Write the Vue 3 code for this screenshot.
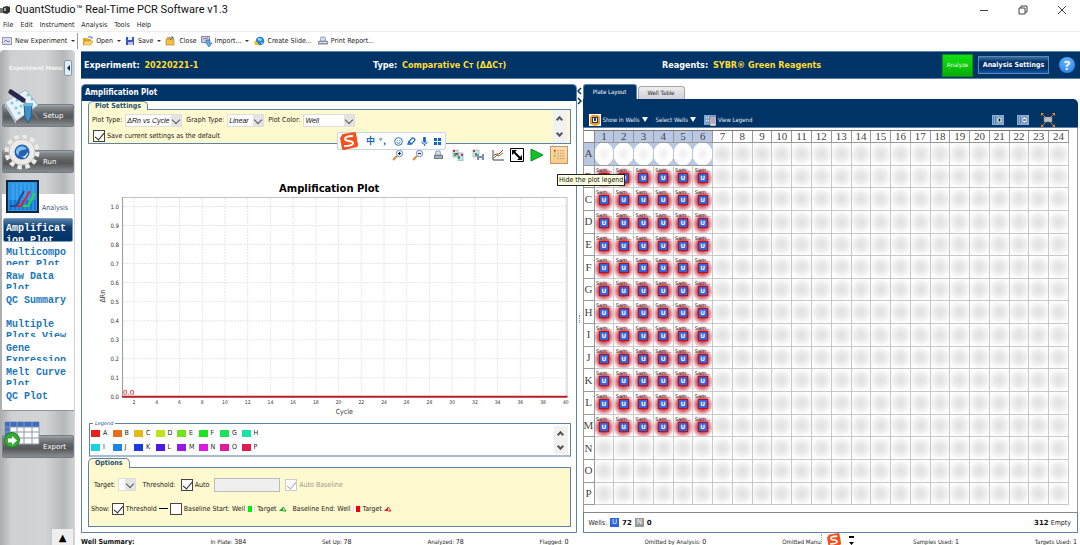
<script setup>
import { ref } from 'vue'

const menus = ['File', 'Edit', 'Instrument', 'Analysis', 'Tools', 'Help']
const tools = [
  { id: 'new', label: 'New Experiment', drop: true },
  { id: 'open', label: 'Open', drop: true },
  { id: 'save', label: 'Save', drop: true },
  { id: 'close', label: 'Close', drop: false },
  { id: 'import', label: 'Import...', drop: true },
  { id: 'slide', label: 'Create Slide...', drop: false },
  { id: 'print', label: 'Print Report...', drop: false },
]
const views = [
  'Amplification Plot', 'Multicomponent Plot', 'Raw Data Plot', 'QC Summary',
  'Multiple Plots View', 'Gene Expression', 'Melt Curve Plot', 'QC Plot',
]
const rows = 'ABCDEFGHIJKLMNOP'.split('')
const colors = [
  '#e8211c', '#e86e1c', '#e3b81a', '#bfe31a', '#74e31a', '#1ee31e', '#1ae35a', '#1ae3a8',
  '#1ad2e3', '#1a86e3', '#1a3ae3', '#4a1ae3', '#961ae3', '#dc1ae3', '#e31a9e', '#e31a50',
]
const legend = rows.map((name, i) => ({ name, color: colors[i] }))
const xTicks = Array.from({ length: 20 }, (_, i) => ({ v: 2 * (i + 1), x: 52 + i * 22.7 }))
const yTicks = Array.from({ length: 11 }, (_, i) => ({ v: (i / 10).toFixed(1), y: 232 - i * 19 }))
const status = [
  ['In Plate', 384], ['Set Up', 78], ['Analyzed', 78], ['Flagged', 0],
  ['Omitted by Analysis', 0], ['Omitted Manually', 0], ['Samples Used', 1], ['Targets Used', 1],
]
const plotType = ref('ΔRn vs Cycle')
const graphType = ref('Linear')
const plotColor = ref('Well')
const saveDefault = ref(true)
const auto = ref(true)
const autoBaseline = ref(true)
const showThreshold = ref(true)
const showBaseline = ref(false)
</script>

<template>
  <div class="app">
    <header class="titlebar">
      <svg class="logo" viewBox="0 0 11 10"><path d="M0 3h3v5H0z" fill="#777" /><path d="M3 2l4-1 3 1v5l-3 2-4-1z" fill="#333" /><path d="M4 3h2v3H4z" fill="#aaa" /></svg>
      <h1>QuantStudio™ Real-Time PCR Software v1.3</h1>
      <div class="winbtns">
        <button aria-label="Minimize"><svg viewBox="0 0 10 10"><path d="M1 5.5h8" /></svg></button>
        <button aria-label="Restore"><svg viewBox="0 0 10 10"><path d="M1 3h6v6H1zM3 3V1h6v6H7" /></svg></button>
        <button aria-label="Close window"><svg viewBox="0 0 10 10"><path d="M1 1l8 8M9 1L1 9" /></svg></button>
      </div>
    </header>
    <nav class="menubar"><button v-for="m in menus" :key="m">{{ m }}</button></nav>
    <div class="toolbar">
      <button v-for="t in tools" :key="t.id" :class="t.id">
        <svg v-if="t.id === 'new'" viewBox="0 0 10 10"><path d="M.5 1.5h9v7h-9z" fill="#d8def4" stroke="#8c97bb" /><path d="M2 6l2-2 2 2 2-1" fill="none" stroke="#c06080" /></svg>
        <svg v-else-if="t.id === 'open'" viewBox="0 0 10 10"><path d="M0 2h4l1 1h3v6H0z" fill="#e0a52a" /><path d="M2 5h8L8 9H0z" fill="#fbd768" stroke="#b8811c" stroke-width=".5" /><path d="M5 1h4v2" fill="none" stroke="#4773ad" /></svg>
        <svg v-else-if="t.id === 'save'" viewBox="0 0 10 10"><path d="M1 1h8v8H1z" fill="#3a55c8" /><path d="M3 1h4v3H3z" fill="#e8ecff" /><path d="M3 6h5v3H3z" fill="#b9c3dd" /></svg>
        <svg v-else-if="t.id === 'close'" viewBox="0 0 10 10"><path d="M1 3h8v6H1z" fill="#f2c14b" stroke="#ab7a17" stroke-width=".6" /><path d="M2 1h4v2H2z" fill="#dca030" /><path d="M5 4l3-3M8 3V1H6" stroke="#3b72c4" fill="none" /></svg>
        <svg v-else-if="t.id === 'import'" viewBox="0 0 12 12"><path d="M.5 1.5h8v6h-8z" fill="#c4cee8" stroke="#7b8bb5" /><path d="M2 4l5-1" stroke="#c56a88" /><path d="M5 5h4v3h2L8 12 5 8z" fill="#65a9df" stroke="#2b6397" stroke-width=".6" /></svg>
        <svg v-else-if="t.id === 'slide'" viewBox="0 0 12 10"><circle cx="7" cy="5" r="4.3" fill="#2f84d6" /><path d="M5 2l4 1-1 2-3-1zM8 6l2 1-2 1z" fill="#a9dcf5" /><path d="M1 5l3 1 2 3H2z" fill="#f1c800" /></svg>
        <svg v-else viewBox="0 0 10 10"><path d="M3 1h4l1 4H2z" fill="#d5deec" stroke="#69748b" stroke-width=".6" /><path d="M0 5h10v3.5H0z" fill="#8390aa" /><path d="M1 6.5h8" stroke="#dfe4f0" /></svg>
        <span>{{ t.label }}</span><i v-if="t.drop" class="caret"></i>
      </button>
    </div>

    <div class="body">
      <aside class="side">
        <div class="sidehead"><span>Experiment Menu</span><button aria-label="Collapse menu"><i></i></button></div>
        <button class="tile">
          <span class="bar">Setup</span>
          <svg viewBox="0 0 36 36"><path d="M1 14L22 2l12 15L12 33z" fill="#e8f1f7" stroke="#9fb6c6" /><path d="M1 14l11 19v3L1 18z" fill="#b5c5d0" /><g fill="#83c6e0"><circle cx="8" cy="15" r="1.5" /><circle cx="12" cy="20" r="1.5" /><circle cx="15" cy="25" r="1.5" /><circle cx="24" cy="7" r="1.5" /><circle cx="28" cy="11" r="1.5" /><circle cx="13" cy="12" r="1.5" /><circle cx="17" cy="18" r="1.5" /></g><path d="M6 2l18 15 10 14" stroke="#777" fill="none" stroke-width="1.5" /><path d="M7 4l12 8" stroke="#28264e" stroke-width="5" stroke-linecap="round" /><path d="M20 16h8l-1 13-3 6-3-6z" fill="#3f93c9" stroke="#235f8d" /><path d="M20 15h9v3h-9z" fill="#6db9e0" /></svg>
        </button>
        <button class="tile">
          <span class="bar">Run</span>
          <svg viewBox="0 0 36 36"><circle cx="18" cy="18" r="15" fill="none" stroke="#ecebe8" stroke-width="5" stroke-dasharray="4.4 3.45" /><circle cx="18" cy="18" r="13" fill="#ecebe8" stroke="#c6c5c2" /><circle cx="18" cy="18" r="7.5" fill="#2360b0" /><path d="M12 19a6 6 0 0 1 11-4l-4 1c-3 0-5 2-4 6z" fill="#7fc2ee" /><path d="M15 22c5 2 8-1 8-4l1 2-3 4z" fill="#fff" /></svg>
        </button>
        <div class="sheet">
          <button class="tile light">
            <span class="bar">Analysis</span>
            <svg viewBox="0 0 34 34"><path d="M1 1h31v31H1z" fill="#2995e8" stroke="#16243c" stroke-width="2" /><path d="M3 20h27v10H3z" fill="#1279d8" /><g stroke="#63b4f0" stroke-width=".7"><path d="M7 3v27M11 3v27M15 3v27M19 3v27M23 3v27M27 3v27" /></g><g fill="none" stroke-width="2"><path d="M4 26h6l8-15" stroke="#294a8a" /><path d="M11 26h4l9-15" stroke="#e02238" /><path d="M17 26h5l7-13" stroke="#35d83c" /></g></svg>
          </button>
          <nav class="views"><button v-for="(v, i) in views" :key="v" :class="{ on: i === 0 }"><span>{{ v }}</span></button></nav>
        </div>
        <button class="tile export">
          <span class="bar">Export</span>
          <svg viewBox="0 0 36 28"><path d="M1 1h34v22H1z" fill="#fff" stroke="#8d98a8" /><path d="M1 1h34v5H1z" fill="#3c6dc2" /><path d="M1 6h5v12H1z" fill="#4577cb" /><path d="M1 6h34M1 11h34M1 17h34M6 1v22M13 1v22M20 1v22M28 1v22" stroke="#8d98a8" /><circle cx="8" cy="19" r="7.5" fill="#39a935" stroke="#1f7e22" /><path d="M4 17.500h4V15l5 4.500-5 4.500v-2.500H4z" fill="#fff" /></svg>
        </button>
        <button class="up" aria-label="Expand">▲</button>
      </aside>

      <main>
        <section class="band">
          <div>Experiment: <b>20220221-1</b></div>
          <div>Type: <b>Comparative C<small>T</small> (ΔΔC<small>T</small>)</b></div>
          <div>Reagents: <b>SYBR® Green Reagents</b></div>
          <button class="analyze">Analyze</button>
          <button class="settings">Analysis Settings</button>
          <button class="help" aria-label="Help">?</button>
        </section>

        <div class="panes">
          <section class="plotpane">
            <h2>Amplification Plot</h2>
            <div class="inner">
              <div class="tabtitle">Plot Settings</div>
              <div class="ybox psettings">
                <div class="fields">
                  <div class="line">
                    <label for="pt">Plot Type:</label>
                    <span class="sel wide"><select id="pt" v-model="plotType"><option>ΔRn vs Cycle</option></select><i></i></span>
                    <label for="gt">Graph Type:</label>
                    <span class="sel"><select id="gt" v-model="graphType"><option>Linear</option></select><i></i></span>
                    <label for="pc">Plot Color:</label>
                    <span class="sel mid"><select id="pc" v-model="plotColor"><option>Well</option></select><i></i></span>
                  </div>
                  <label class="chk"><input v-model="saveDefault" type="checkbox" />Save current settings as the default</label>
                </div>
                <div class="scroller"><button aria-label="Scroll up"><i class="u"></i></button><button aria-label="Scroll down"><i class="d"></i></button></div>
              </div>

              <div class="plottools">
                <button aria-label="Zoom in"><svg viewBox="0 0 12 12"><path d="M1 11l4-4" stroke="#d98a3d" stroke-width="2" /><circle cx="7.500" cy="4.500" r="3.200" fill="#e5eefc" stroke="#7693c2" /><path d="M6 4.500h3M7.500 3v3" stroke="#223" /></svg></button>
                <button aria-label="Zoom out"><svg viewBox="0 0 12 12"><path d="M1 11l4-4" stroke="#d98a3d" stroke-width="2" /><circle cx="7.500" cy="4.500" r="3.200" fill="#e5eefc" stroke="#7693c2" /><path d="M6 4.500h3" stroke="#223" /></svg></button>
                <button aria-label="Print plot"><svg viewBox="0 0 12 12"><path d="M4 2h4l1 4H3z" fill="#d5deec" stroke="#69748b" stroke-width=".6" /><path d="M2 6h9v4H2z" fill="#6f7f86" /><path d="M3 8h7" stroke="#dfe4f0" /></svg></button>
                <button aria-label="Copy plot"><svg viewBox="0 0 12 12"><path d="M1 1h5v7H1zM6 4h5v8H6z" fill="#c9e0ee" stroke="#6aa0bd" stroke-width=".6" /><path d="M1 1h2v2H1zM4 4h2v2H4zM9 5h2v2H9z" fill="#d83030" /><path d="M2 4h2v3H2zM6 7h2v3H6z" fill="#37a653" /></svg></button>
                <button aria-label="Save plot"><svg viewBox="0 0 12 12"><path d="M1 1h6v7H1z" fill="#cfe3ee" stroke="#83a8bb" stroke-width=".6" /><path d="M1 1h2v2H1z" fill="#d83030" /><path d="M3 4h2v3H3z" fill="#37a653" /><path d="M5 5h7v6H5z" fill="#8291a5" /><path d="M7 5h3v2H7zM7 9h3v2H7z" fill="#edf1f6" /></svg></button>
                <button aria-label="Plot properties"><svg viewBox="0 0 12 12"><path d="M1 1v10h11" fill="none" stroke="#444" /><path d="M2 9l3-3 2 1 4-3" fill="none" stroke="#3c9a48" /><path d="M2 6l3-1 2 0 4-4" fill="none" stroke="#d22" /></svg></button>
                <button aria-label="Fit"><svg viewBox="0 0 14 14"><path d="M.5.5h13v13H.5z" fill="#fff" stroke="#000" /><path d="M4 4l6 6" stroke="#000" stroke-width="2" /><path d="M2 2h5L2 7zM12 12H7l5-5z" /></svg></button>
                <button aria-label="Play"><svg viewBox="0 0 14 14"><path d="M1 1l12 6-12 6z" fill="#12c22b" stroke="#0c8a1d" /></svg></button>
                <button class="active" aria-label="Hide legend" aria-describedby="tip"><svg viewBox="0 0 14 14"><g><path d="M1 1h2v2H1z" fill="#d22" /><path d="M1 4h2v2H1z" fill="#e8b320" /><path d="M1 7h2v2H1z" fill="#57c8a0" /><path d="M1 10h2v2H1z" fill="#d9e34a" /></g><path d="M5 2h8M5 5h8M5 8h8M5 11h8" stroke="#b89062" stroke-dasharray="2 1" /></svg></button>
                <span id="tip" role="tooltip">Hide the plot legend</span>
              </div>

              <svg class="chart" viewBox="0 0 493 256">
                <text class="ct" x="247" y="28">Amplification Plot</text>
                <path d="M40.500 33.500h444v199" fill="none" stroke="#c4c4c4" />
                <g class="grid"><path v-for="t in xTicks" :key="t.v" :d="`M${t.x} 34V232`" /><path v-for="t in yTicks" :key="t.v" :d="`M41 ${t.y + .5}H484`" /></g>
                <path d="M40.500 33V232" stroke="#999" />
                <g class="yt"><text v-for="t in yTicks" :key="t.v" x="37" :y="t.y + 3">{{ t.v }}</text></g>
                <g class="xt"><text v-for="t in xTicks" :key="t.v" :x="t.x" y="240">{{ t.v }}</text></g>
                <path d="M40 232.500h445" stroke="#b81d25" stroke-width="2" />
                <text class="zero" x="41" y="231">0.0</text>
                <text class="ax" x="262" y="250">Cycle</text>
                <text class="ax" transform="translate(23 132) rotate(-90)">ΔRn</text>
              </svg>

              <fieldset class="legend">
                <legend>Legend</legend>
                <ul><li v-for="l in legend" :key="l.name"><i :style="{ background: l.color }"></i>{{ l.name }}</li></ul>
                <div class="scroller"><button aria-label="Scroll legend up"><i class="u"></i></button><button aria-label="Scroll legend down"><i class="d"></i></button></div>
              </fieldset>

              <div class="tabtitle opt">Options</div>
              <div class="ybox options">
                <div class="line first">
                  <label for="tg">Target:</label>
                  <span class="sel tiny"><select id="tg"><option></option></select><i></i></span>
                  <label class="th" for="thr">Threshold:</label>
                  <label class="chk"><input v-model="auto" type="checkbox" />Auto</label>
                  <input id="thr" class="field" type="text" disabled />
                  <label class="chk off"><input v-model="autoBaseline" type="checkbox" disabled />Auto Baseline</label>
                </div>
                <div class="line show">
                  <span>Show:</span>
                  <label class="chk"><input v-model="showThreshold" type="checkbox" />Threshold</label>
                  <i class="dash"></i>
                  <label class="chk"><input v-model="showBaseline" type="checkbox" />Baseline Start: Well</label>
                  <i class="sw green"></i><span>Target</span>
                  <svg class="tri" viewBox="0 0 8 6"><path d="M0 5l4-4v4z" fill="#18a82c" /><path d="M4 1l3 4H4" fill="none" stroke="#18a82c" /></svg>
                  <span class="end">Baseline End: Well</span><i class="sw red"></i><span>Target</span>
                  <svg class="tri" viewBox="0 0 8 6"><path d="M0 5l4-4v4z" fill="#d81e28" /><path d="M4 1l3 4H4" fill="none" stroke="#d81e28" /></svg>
                </div>
              </div>
            </div>
          </section>

          <div class="splitter"><svg viewBox="0 0 5 18"><path d="M4 1L1 4l3 3M1 11l3 3-3 3" fill="none" stroke="#036" stroke-width="1.500" /></svg><i></i></div>

          <section class="platepane">
            <div class="tabs"><button class="on">Plate Layout</button><button>Well Table</button></div>
            <div class="pbar">
              <button><svg viewBox="0 0 12 12"><path d="M0 0h12v12H0z" fill="#fff" /><path d="M1 3l2-2h6l2 2v7l-5 2-5-2z" fill="#f19a16" /><path d="M3 3h6v6H3z" fill="#253a70" /><path d="M4.500 4v3.500h3V4" fill="none" stroke="#fff" /></svg>Show in Wells<i class="wd"></i></button>
              <button>Select Wells<i class="wd"></i></button>
              <button class="vl"><svg viewBox="0 0 12 12"><path d="M0 1h12v10H0z" fill="#7fa8d0" /><path d="M2 3h1v1H2zM4 3h1v1H4zM2 6h1v1H2zM4 6h1v1H4z" fill="#fff" /><path d="M6 3h6v9H6z" fill="#dbe3ed" stroke="#7c4b4b" stroke-width=".6" /><path d="M7 5h4M7 7h4M7 9h4" stroke="#879" /></svg>View Legend</button>
              <button class="z1" aria-label="Zoom in wells"><svg viewBox="0 0 12 10"><path d="M0 0h12v10H0z" fill="#86add5" /><path d="M1 2h4M1 4h3M1 6h3M1 8h4" stroke="#2c6197" stroke-dasharray="1 1" /><circle cx="7.500" cy="5" r="3" fill="#eef4fb" stroke="#6c86a8" /><path d="M6 5h3M7.500 3.500v3" stroke="#113" /></svg></button>
              <button class="z2" aria-label="Zoom out wells"><svg viewBox="0 0 12 10"><path d="M0 0h12v10H0z" fill="#86add5" /><path d="M1 2h4M1 4h3M1 6h3M1 8h4" stroke="#2c6197" stroke-dasharray="1 1" /><circle cx="7.500" cy="5" r="3" fill="#eef4fb" stroke="#6c86a8" /><path d="M6 5h3" stroke="#113" /></svg></button>
              <button class="z3" aria-label="Fit wells"><svg viewBox="0 0 14 14"><path d="M1 1l12 12M13 1L1 13" stroke="#d87c16" /><path d="M0 0h3L0 3zM14 0v3l-3-3zM0 14v-3l3 3zM14 14h-3l3-3z" fill="#e58619" /><path d="M3 4h8v5H3z" fill="#b9bcc0" stroke="#777" stroke-width=".5" /></svg></button>
            </div>
            <div class="platewrap">
              <table class="plate">
                <thead><tr><td></td><th v-for="c in 24" :key="c" scope="col" :class="{ hl: c < 7 }">{{ c }}</th></tr></thead>
                <tbody>
                  <tr v-for="(r, ri) in rows" :key="r">
                    <th scope="row" :class="{ hl: ri === 0 }">{{ r }}</th>
                    <td v-for="c in 24" :key="c" :class="{ picked: ri === 0 && c < 7, full: ri > 0 && ri < 13 && c < 7 }">
                      <template v-if="ri > 0 && ri < 13 && c < 7"><span>Sam...</span><b>U</b></template>
                    </td>
                  </tr>
                </tbody>
              </table>
            </div>
            <footer class="wells"><span>Wells:</span><i class="bu">U</i><b>72</b><i class="bn">N</i><b>0</b><span class="empty"><b>312</b> Empty</span></footer>
          </section>
        </div>

        <footer class="status"><strong>Well Summary:</strong><span v-for="s in status" :key="s[0]">{{ s[0] }}: <em>{{ s[1] }}</em></span></footer>
      </main>
    </div>

    <div class="ime">
      <svg class="s" viewBox="0 0 18 18"><path d="M2 3q0-1 1-1l12-2q1 0 1 1l2 12q0 2-1 2L4 18q-2 0-2-1L0 6z" fill="#f4511e" /><path d="M13 4Q5 4 5 7c0 3 8 1 8 4s-5 3-9 3" fill="none" stroke="#fff" stroke-width="2" /></svg>
      <span lang="zh">中</span>
      <span class="punct" lang="zh">°，</span>
      <svg viewBox="0 0 10 10"><circle cx="5" cy="5" r="4.300" /><path d="M3 6q2 2 4 0M3.500 3.500v1M6.500 3.500v1" /></svg>
      <svg viewBox="0 0 10 10"><path d="M1 8L2 5l4-4q2 0 3 2L5 8zM2 5l3 3" stroke-width="1.300" /></svg>
      <svg viewBox="0 0 10 10"><path d="M5 1v4" stroke-width="3" stroke-linecap="round" /><path d="M2 5q0 3 3 3t3-3M5 8v2" /></svg>
      <svg viewBox="0 0 10 10"><path d="M1 1h3.500v3.500H1zM5.500 1H9v3.500H5.500zM1 5.500h3.500V9H1zM5.500 5.500H9V9H5.500z" fill="#1464b8" stroke="none" /></svg>
    </div>
    <div class="imemini">
      <i></i>
      <svg viewBox="0 0 18 18"><path d="M2 3q0-1 1-1l12-2q1 0 1 1l2 12q0 2-1 2L4 18q-2 0-2-1L0 6z" fill="#f4511e" /><path d="M13 4Q5 4 5 7c0 3 8 1 8 4s-5 3-9 3" fill="none" stroke="#fff" stroke-width="2" /></svg>
      <svg class="m" viewBox="0 0 6 10"><path d="M0 1h5v2H0zM0 7h5L2.500 10z" /></svg>
    </div>
  </div>
</template>

<style>
html, body { margin: 0; background: #fff; }
</style>

<style scoped>
* { box-sizing: border-box; }
.app { position: relative; display: flex; flex-direction: column; min-height: 100vh; overflow: hidden; background: #fff; color: #222; font: 7px/10px "DejaVu Sans Condensed", "DejaVu Sans", sans-serif; white-space: nowrap; }
button { margin: 0; padding: 0; border: 0; background: none; color: inherit; font: inherit; white-space: nowrap; }
i { font-style: normal; }
svg { display: block; flex: none; }
h1, h2, ul { margin: 0; padding: 0; font-weight: normal; list-style: none; }

.titlebar { display: flex; align-items: center; height: 19px; }
.logo { width: 11px; height: 10px; }
h1 { margin-left: 4px; font: 11px/18px Roboto, sans-serif; color: #111; }
.winbtns { display: flex; gap: 29px; margin-left: auto; padding-right: 13px; }
.winbtns svg { width: 10px; height: 10px; fill: none; stroke: #444; }
.menubar { display: flex; gap: 7px; height: 13px; padding: 0 3px; border-bottom: 1px solid #eee; }
.toolbar { display: flex; align-items: center; height: 18px; padding-left: 2px; }
.toolbar button { display: flex; align-items: center; gap: 3px; height: 16px; }
.toolbar svg { width: 10px; height: 10px; }
.toolbar .import svg, .toolbar .slide svg { width: 12px; height: 12px; }
.toolbar .new { padding-right: 2px; border-right: 1px solid #999; }
.toolbar .open { margin-left: 5px; }
.toolbar .save { margin-left: 4px; }
.toolbar .slide { margin-left: 4px; }
.toolbar .print { margin-left: 6px; }
.toolbar .close { margin-left: 4px; gap: 4px; }
.toolbar .import { margin-left: 4px; gap: 2px; }
.caret { margin-left: 1px; border: 2px solid transparent; border-top-color: #333; border-bottom: 0; }

.body { display: flex; flex: 1; min-height: 0; }
.side { display: flex; flex-direction: column; flex: none; width: 75px; padding: 0 1px 0 2px; background: linear-gradient(90deg, #a9abad, #cfd0d1 15%, #d3d4d5 60%, #b5b7b9 85%, #d5d5d7); border-radius: 4px 4px 0 0; }
.sidehead { display: flex; align-items: center; justify-content: space-between; height: 38px; padding: 0 2px 3px 7px; color: #f3f3f3; font: bold 6px/8px "DejaVu Sans Condensed", sans-serif; }
.sidehead button { display: flex; align-items: center; justify-content: center; width: 8px; height: 16px; border: 1px solid #7e9aad; border-radius: 2px; background: #e3edf3; }
.sidehead i { border: 3px solid transparent; border-right-color: #124; border-left: 0; }
.tile { display: grid; width: 100%; height: 39px; margin-bottom: 7px; }
.tile > * { grid-area: 1 / 1; }
.tile svg { align-self: start; width: 36px; height: 36px; margin-left: 2px; z-index: 1; }
.bar { display: flex; align-items: center; align-self: end; height: 23px; padding-left: 40px; border: 1px solid #71808b; border-radius: 2px; background: linear-gradient(#a2a5a8, #85888b 12%, #606366 40%, #55585b 60%, #84888b 95%); color: #fff; font: 7px/10px "DejaVu Sans", sans-serif; }
.sheet { margin: 0 0 10px; border-bottom: 1px solid #909498; background: linear-gradient(transparent 14px, #fff 14px); }
.light { height: 38px; margin: 0; }
.light svg { width: 34px; height: 34px; margin-left: 4px; }
.light .bar { height: 20px; border: 0; background: none; color: #34537c; font-family: "DejaVu Sans Condensed", sans-serif; }
.views { display: flex; flex-direction: column; padding: 0 1px; }
.views button { display: flex; align-items: flex-start; height: 24px; padding: 5px 3px 0; text-align: left; overflow: hidden; }
.views span { width: 62px; height: 18px; overflow: hidden; white-space: normal; overflow-wrap: break-word; color: #1d77b5; font: bold 10px/12px "Liberation Mono", monospace; }
.views .on { border: 1px solid #7a9cbd; border-radius: 2px; background: linear-gradient(#5580ab, #0c3c6f 40%, #036); padding: 4px 2px 0; }
.views .on span { color: #fff; }
.export { height: 37px; margin-bottom: auto; }
.export svg { height: 28px; }
.up { align-self: end; width: 21px; height: 18px; margin-right: 1px; background: #eee; color: #000; font: 10px/16px "DejaVu Sans", sans-serif; }

main { display: flex; flex-direction: column; flex: 1; min-width: 0; padding: 1px 0 0 6px; }
.band { display: grid; grid-template-columns: 289px 289px 1fr auto auto auto; align-items: center; height: 28px; padding: 0 5px 0 3px; border: solid #5c82a5; border-width: 1px 0; background: #036; color: #fff; font: bold 9px/14px "DejaVu Sans Condensed", sans-serif; }
.band b { color: #fd3; margin-left: 2px; }
.band small { font-size: 7px; }
.analyze { width: 31px; height: 23px; border: 1px solid #0b8d13; background: linear-gradient(#11e011, #0ac50a 60%, #0aa80c); color: #eaffea; font: 6px/8px "DejaVu Sans Condensed", sans-serif; }
.settings { width: 71px; height: 18px; margin: 0 10px 0 5px; border: 1px solid #5e88b5; background: linear-gradient(#3f6ea0, #03346a 30%, #023064 70%, #1256a8); color: #fff; font: bold 7px/14px "DejaVu Sans Condensed", sans-serif; }
.help { width: 16px; height: 16px; border-radius: 50%; background: radial-gradient(circle at 50% 30%, #6db6ff, #1d78e8); color: #fff; font: bold 13px/16px "Open Sans", sans-serif; }

.panes { display: grid; grid-template-columns: minmax(0, 1fr) 6px minmax(0, 1fr); flex: 1; min-height: 0; margin: 5px 2px 0 0; }
.plotpane { display: flex; flex-direction: column; min-width: 0; border: 1px solid #5f83a6; border-radius: 4px 4px 0 0; }
h2 { height: 16px; padding-left: 3px; border-radius: 3px 3px 0 0; background: #036; color: #fff; font: bold 8px/16px "DejaVu Sans Condensed", sans-serif; }
.inner { display: flex; flex-direction: column; flex: 1; min-height: 0; padding-bottom: 5px; }
.tabtitle { align-self: start; height: 9px; margin: 0 0 -1px 6px; padding: 0 6px; border: 1px solid #5f83a6; border-bottom: 0; border-radius: 5px 5px 0 0; background: #fff9cf; color: #234f75; font: bold 7px/8px "DejaVu Sans Condensed", sans-serif; z-index: 1; }
.ybox { margin: 0 5px 0 6px; border: 1px solid #5f83a6; background: #fff9cf; }
.psettings { display: flex; justify-content: space-between; height: 35px; padding: 0 3px 0 3px; }
.fields { padding-top: 3px; }
.line { display: flex; align-items: center; gap: 3px; height: 14px; }
.sel { display: flex; position: relative; width: 37px; height: 13px; margin-right: 1px; border: 1px solid #ddd; background: #fff; }
.sel.wide { width: 57px; }
.sel.mid { width: 52px; }
.sel.tiny { width: 18px; }
.sel select { width: 100%; margin: 0; padding: 0 0 0 1px; border: 0; appearance: none; background: none; color: #111; font: italic 7px/11px "Liberation Sans", sans-serif; }
.sel i { position: absolute; inset: 0 0 0 auto; width: 10px; background: #e4e4e4; pointer-events: none; }
.sel i::before, .scroller i { content: ""; display: block; width: 5px; height: 5px; border: solid #555; border-width: 0 1px 1px 0; transform: rotate(45deg); }
.sel i::before { margin: 2px; }
.chk { display: flex; align-items: center; gap: 2px; }
.fields .chk { margin-top: 3px; padding-left: 1px; }
.chk input { position: relative; flex: none; width: 12px; height: 12px; margin: 0; border: 1px solid #444; appearance: none; background: #fff; }
.chk input:checked::before { content: ""; position: absolute; left: 3px; top: 0; width: 4px; height: 8px; border: solid #222; border-width: 0 1px 1px 0; transform: rotate(40deg); }
.chk.off { color: #9c9a8c; }
.chk.off input { border-color: #ccc; }
.chk.off input:checked::before { border-color: #aaa; }
.scroller { display: flex; flex-direction: column; width: 14px; background: #f1f1f1; }
.scroller button { display: flex; align-items: center; justify-content: center; flex: 1; }
.scroller i { border-width: 0 2px 2px 0; }
.scroller .u { transform: translateY(1px) rotate(225deg); }
.scroller .d { transform: translateY(-1px) rotate(45deg); }
.plottools { position: relative; display: flex; align-items: center; justify-content: flex-end; height: 20px; padding: 2px 8px 0 0; gap: 8px; }
.plottools svg { width: 12px; height: 12px; }
.plottools button:nth-child(7) svg, .plottools button:nth-child(8) svg { width: 14px; height: 14px; }
.plottools button:nth-child(n+7) { margin-left: -2px; }
.plottools .active { display: flex; align-items: center; justify-content: center; width: 18px; height: 18px; border: 1px solid #c19a63; background: linear-gradient(#fddfb0, #fbc98a); }
#tip { position: absolute; left: 475px; top: 30px; z-index: 5; height: 12px; padding: 0 1px; border: 1px solid #222; background: #ffffe1; color: #111; font-size: 7px; line-height: 10px; }
.chart { flex: 1; min-height: 0; width: 100%; }
.chart text { font-family: "DejaVu Sans Condensed", sans-serif; fill: #333; }
.chart .ct { font: bold 10px "DejaVu Sans", sans-serif; fill: #000; text-anchor: middle; }
.grid path { stroke: #e6e6e6; stroke-dasharray: 2 1; }
.yt text { font-size: 6px; text-anchor: end; }
.xt text { font-size: 5px; text-anchor: middle; }
.chart .ax { font-size: 7px; text-anchor: middle; }
.chart .zero { font: 7px "DejaVu Serif", serif; fill: #c00; }
.legend { display: flex; position: relative; justify-content: space-between; height: 37px; min-width: 0; margin: 0 5px 1px 7px; padding: 0 2px 1px 1px; border: 1px solid #5f83a6; border-bottom: 2px solid #a9bccf; }
.legend legend { height: 6px; margin-left: 2px; padding: 0 2px; color: #25588a; font: italic 5px/6px "DejaVu Sans", sans-serif; }
.legend ul { display: grid; grid-template-columns: repeat(8, 1fr); align-content: center; flex: none; width: 172px; }
.legend li { display: flex; align-items: center; gap: 3px; height: 14px; }
.legend li i { width: 9px; height: 7px; }
.tabtitle.opt { height: 10px; }
.options { display: flex; flex-direction: column; justify-content: space-evenly; height: 60px; padding: 0 3px 1px 2px; }
.first { padding-left: 3px; }
.first .th { margin-left: 2px; }
.first > .chk { margin-left: 2px; }
.field { width: 66px; height: 14px; margin: 0 0 0 2px; border: 1px solid #bbb; background: #efefef; }
.show { gap: 2px; }
.dash { width: 9px; height: 1px; background: #000; }
.sw { width: 8px; height: 6px; border: 1px solid #ddd; border-width: 0 1px; background: linear-gradient(90deg, #0e0 60%, #fff 60%); }
.sw.red { background: linear-gradient(90deg, #fff 35%, #e00 35%); }
.tri { width: 8px; height: 6px; }
.end { margin-left: 4px; }

.splitter { display: flex; flex-direction: column; align-items: center; padding-top: 3px; }
.splitter svg { width: 5px; height: 18px; }
.splitter i { width: 1px; height: 8px; margin: auto; border-left: 1px dotted #888; }
.platepane { display: flex; flex-direction: column; min-width: 0; }
.tabs { display: flex; align-items: end; height: 15px; gap: 1px; }
.tabs button { width: 47px; height: 13px; border: 1px solid #a8a8b4; border-bottom: 0; border-radius: 3px 3px 0 0; background: linear-gradient(#eee, #d1cfd8); color: #222; font-size: 6px; }
.tabs .on { width: 54px; height: 15px; border-color: #5f83a6; background: #036; color: #fff; }
.pbar { display: flex; align-items: center; height: 29px; padding: 13px 23px 0 6px; border-bottom: 1px solid #5f83a6; border-radius: 0 5px 0 0; background: #036; color: #e9eff6; font-size: 6px; }
.pbar button { display: flex; align-items: center; gap: 2px; margin-right: 8px; }
.pbar svg { width: 12px; height: 12px; }
.wd { border: 3px solid transparent; border-top: 5px solid #fff; border-bottom: 0; }
.pbar .z1 { margin: 0 13px 0 auto; }
.pbar .z2 { margin-right: 12px; }
.pbar .z3 { margin: 0; }
.pbar .z3 svg { width: 14px; height: 14px; }
.platewrap { display: flex; flex: 1; min-height: 0; padding: 2px 8px 7px 0; border: solid #9a9a9a; border-width: 0 1px; }
.plate { display: grid; flex: 1; grid-template-columns: 11px repeat(24, minmax(0, 1fr)); grid-template-rows: 12px repeat(16, minmax(0, 1fr)); border-top: 1px solid #777; }
.plate thead, .plate tbody, .plate tr { display: contents; }
.plate th { display: flex; align-items: center; justify-content: center; padding: 0; border: solid #999; border-width: 0 1px 1px 0; font: 11px/11px "Liberation Serif", serif; color: #444; }
.plate .hl { background: #b9c8e2; }
.plate td { min-width: 0; padding: 0; border: solid #c9c9c9; border-width: 0 1px 1px 0; }
.plate tbody td { background: radial-gradient(circle, #e0e0e0 0, #ececec 6px, #fdfdfd 11px); }
.plate thead td { border-color: #888; }
.plate tbody .picked { border-color: #b9c8e2; border-bottom-color: #999; background: radial-gradient(ellipse closest-side, #eee 0, #fff 75%, #fff 103%, #b9c8e2 108%); }
.plate tbody .full { display: flex; flex-direction: column; align-items: center; padding-top: 1px; background: radial-gradient(circle at 50% 58%, #bb1526 0, #cf4854 5px, #f0c0c4 9px, #fff 11px); }
.full span { height: 6px; color: #222; font: 5px/6px "DejaVu Sans", sans-serif; }
.full b { width: 10px; height: 10px; border: 1px solid #ad1523; background: #2f63e0; color: #fff; font: bold 6px/8px "DejaVu Sans", sans-serif; text-align: center; box-shadow: 0 0 1px #ad1523; }
.wells { display: flex; align-items: center; gap: 3px; height: 21px; padding: 0 6px 0 5px; border: 1px solid #5f83a6; border-top-color: #888; }
.wells i { width: 9px; height: 9px; background: #2a66dd; color: #fff; font: 7px/9px "DejaVu Sans", sans-serif; text-align: center; }
.wells .bn { background: #999; }
.wells b { color: #111; font: bold 7px/10px "DejaVu Sans", sans-serif; }
.empty { margin-left: auto; }
.status { display: flex; align-items: center; justify-content: space-between; height: 14px; padding: 3px 3px 0 0; font-size: 6px; }
.status strong { font-size: 7px; color: #111; }
.status em { font-style: normal; font-size: 7px; }

.ime { position: absolute; left: 337px; top: 132px; z-index: 6; display: flex; align-items: center; gap: 4px; height: 18px; padding: 0 3px 0 2px; border: 1px solid #c9d6e4; border-radius: 2px; background: #fff; color: #1464b8; font: bold 9px/14px "Noto Sans CJK SC", sans-serif; }
.ime svg { width: 9px; height: 9px; fill: none; stroke: #1464b8; }
.ime .s { width: 18px; height: 18px; margin-right: 4px; stroke: none; }
.punct { font-size: 8px; }
.imemini { position: absolute; left: 821px; bottom: 0; z-index: 6; display: flex; align-items: center; gap: 5px; width: 42px; height: 14px; background: #fff; }
.imemini i { height: 12px; border-left: 1px dotted #aaa; }
.imemini svg { width: 14px; height: 14px; }
.imemini .m { width: 6px; height: 10px; margin-left: 3px; }
</style>
